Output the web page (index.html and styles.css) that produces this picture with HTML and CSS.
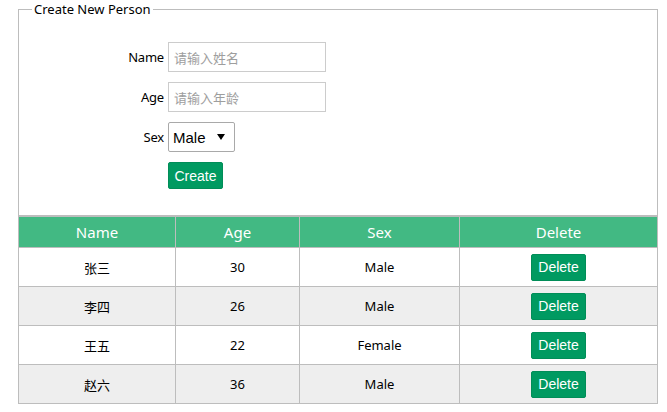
FILE: index.html
```html
<!DOCTYPE html>
<html>
<head>
<meta charset="utf-8">
<link rel="stylesheet" href="styles.css">
</head>
<body>
<div class="wrap">
  <fieldset class="box">
    <legend class="legend">Create New Person</legend>
    <div class="form">
      <label class="label">Name</label>
      <input class="input" type="text" placeholder="请输入姓名">
      <label class="label">Age</label>
      <input class="input" type="text" placeholder="请输入年龄">
      <label class="label">Sex</label>
      <span class="select-wrap"><select class="select"><option>Male</option><option>Female</option></select></span>
      <span></span>
      <span><button class="btn btn-create">Create</button></span>
    </div>
  </fieldset>
  <table class="table">
    <colgroup>
      <col class="c1"><col class="c2"><col class="c3"><col class="c4">
    </colgroup>
    <thead>
      <tr><th>Name</th><th>Age</th><th>Sex</th><th>Delete</th></tr>
    </thead>
    <tbody>
      <tr><td>张三</td><td>30</td><td>Male</td><td><button class="btn btn-del">Delete</button></td></tr>
      <tr><td>李四</td><td>26</td><td>Male</td><td><button class="btn btn-del">Delete</button></td></tr>
      <tr><td>王五</td><td>22</td><td>Female</td><td><button class="btn btn-del">Delete</button></td></tr>
      <tr><td>赵六</td><td>36</td><td>Male</td><td><button class="btn btn-del">Delete</button></td></tr>
    </tbody>
  </table>
</div>
</body>
</html>
```

FILE: styles.css
```css
html, body {
  margin: 0;
  padding: 0;
  background: #fff;
}
body {
  font-family: "Noto Sans", "Noto Sans CJK SC", sans-serif;
  font-size: 13px;
  color: #000;
}
.wrap {
  margin-left: 18px;
  width: 640px;
}
.box {
  margin: 0;
  border: 1px solid #bdbdbd;
  padding: 24px 13px 26px 13px;
  box-sizing: border-box;
  width: 640px;
}
.legend {
  padding: 0 2px;
  font-size: 13px;
  line-height: 18px;
}
.form {
  display: grid;
  grid-template-columns: 132px auto;
  column-gap: 4px;
  row-gap: 10px;
  align-items: center;
}
.label {
  text-align: right;
  font-size: 13px;
  letter-spacing: -0.2px;
}
.input {
  box-sizing: border-box;
  width: 158px;
  height: 30px;
  border: 1px solid #ccc;
  padding: 0 5px;
  margin: 0;
  font-family: "Noto Sans CJK SC", sans-serif;
  font-size: 13px;
  outline: none;
}
.input::placeholder {
  color: #9e9e9e;
}
.select-wrap {
  position: relative;
  display: inline-block;
  width: 67px;
  height: 30px;
}
.select-wrap::after {
  content: "";
  position: absolute;
  right: 10px;
  top: 12px;
  border-left: 4px solid transparent;
  border-right: 4px solid transparent;
  border-top: 6px solid #000;
  pointer-events: none;
}
.select {
  appearance: none;
  -webkit-appearance: none;
  box-sizing: border-box;
  width: 67px;
  height: 30px;
  margin: 0;
  border: 1px solid #a9a9a9;
  border-radius: 2px;
  background: #fff;
  padding: 0 0 0 4px;
  font-family: "Liberation Sans", Arial, sans-serif;
  font-size: 15px;
  color: #000;
}
.btn {
  border: 1px solid #018d58;
  border-radius: 2px;
  background: #009a61;
  color: #fff;
  font-family: "Liberation Sans", Arial, sans-serif;
  font-size: 14px;
  padding: 0;
  margin: 0;
  cursor: pointer;
}
.btn-create {
  width: 55px;
  height: 27px;
  display: block;
}
.btn-del {
  width: 55px;
  height: 27px;
}
.table {
  width: 639px;
  border-collapse: collapse;
  table-layout: fixed;
  border: 1px solid #bdbdbd;
}
.c1 { width: 157px; }
.c2 { width: 124px; }
.c3 { width: 160px; }
.c4 { width: 198px; }
.table th {
  background: #42b983;
  color: #fff;
  font-weight: normal;
  font-size: 15px;
  height: 30px;
  padding: 0;
  border: 1px solid #bdbdbd;
}
.table td {
  text-align: center;
  height: 38px;
  padding: 0;
  border: 1px solid #bdbdbd;
  font-size: 13px;
}
.table tbody tr:nth-child(even) td {
  background: #eeeeee;
}
.table th + th {
  border-left-color: #e0e0e0;
}
```
